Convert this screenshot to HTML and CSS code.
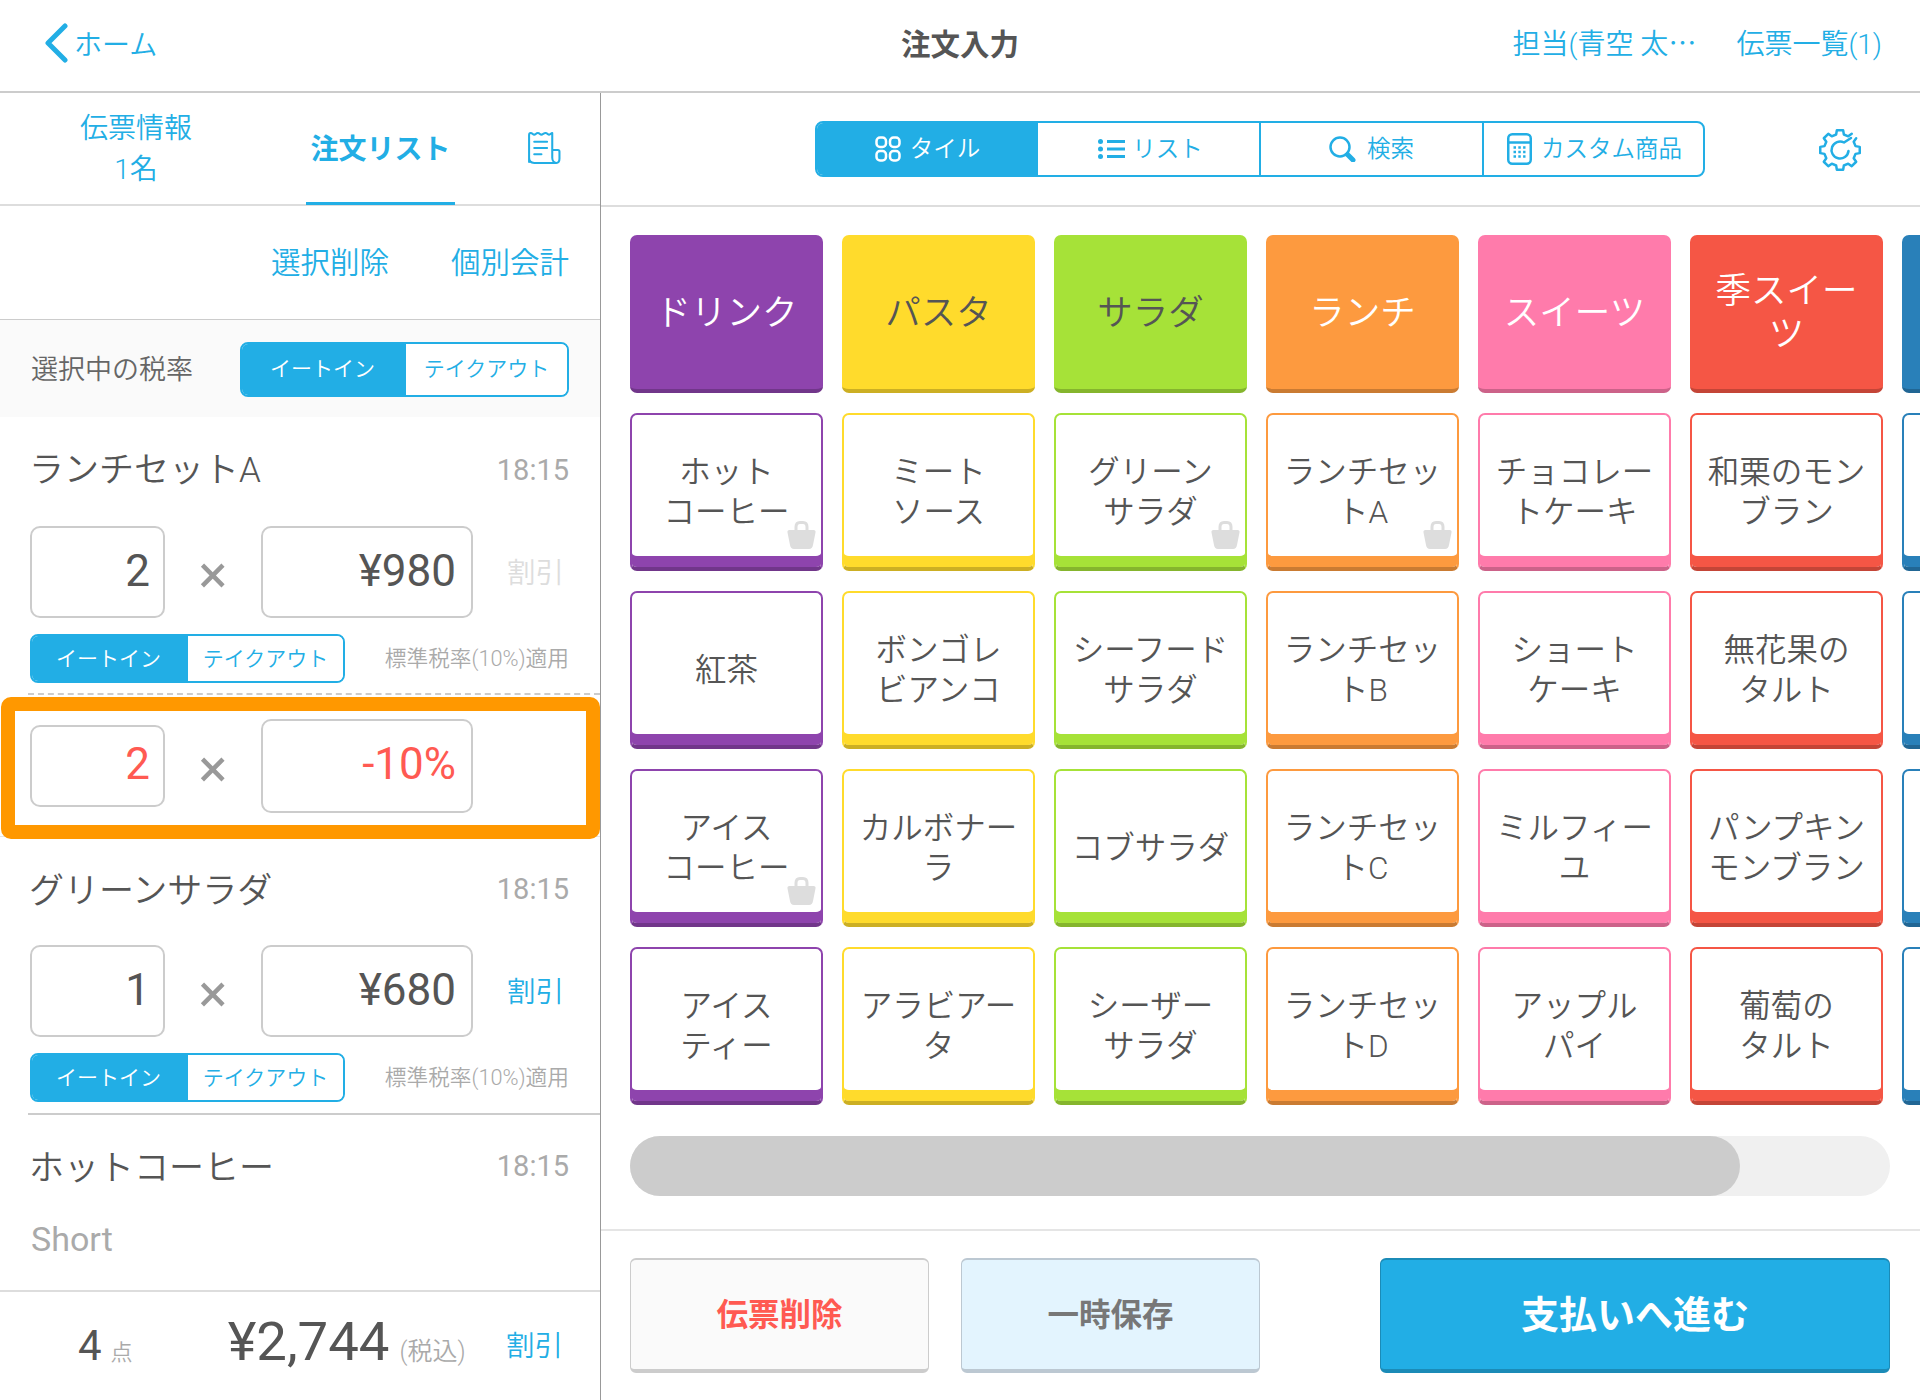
FILE: index.html
```html
<!DOCTYPE html>
<html lang="ja">
<head>
<meta charset="utf-8">
<title>注文入力</title>
<link rel="stylesheet" href="styles.css">
</head>
<body>
<div class="page">
  <header class="top">
    <a class="back">
      <svg class="chev" viewBox="0 0 24 40"><path d="M21 3 4 20l17 17" /></svg>
      <span>ホーム</span>
    </a>
    <h1 class="title">注文入力</h1>
    <div class="top-right">
      <a class="staff">担当(青空 太<span class="cjk">…</span></a>
      <a class="slips">伝票一覧(1)</a>
    </div>
  </header>
  <main class="main">
    <section class="left">
      <nav class="tabs">
        <a class="tab tab-info">伝票情報<br>1名</a>
        <a class="tab tab-active">注文リスト</a>
        <svg class="receipt" viewBox="0 0 34 32"><path d="M3 30V4c0-1 .5-2 1.500-2 2 0 2 1.500 3.500 1.500S9.500 2 11.500 2s2 1.500 3.500 1.500S17 2 19 2s2 1.500 3.500 1.500S24 2 25.500 2V26c0 3 2 5 4 5s3-2 3-4v-7c0-1-.7-1.500-1.500-1.500h-5M3 26c0 3 2 5 5 5h21.500M8 10.500h12.500M8 16.500h12.500M8 22.500h7" /></svg>
      </nav>
      <div class="actions">
        <a>選択削除</a>
        <a>個別会計</a>
      </div>
      <div class="taxbar">
        <span class="taxlabel">選択中の税率</span>
        <div class="toggle toggle-lg"><span class="on">イートイン</span><span class="off">テイクアウト</span></div>
      </div>

      <div class="item-head first"><span class="name">ランチセットA</span><span class="time">18:15</span></div>
      <div class="inputs">
        <div class="box qty">2</div><span class="times">×</span><div class="box price">¥980</div><a class="disc disabled">割引</a>
      </div>
      <div class="taxrow">
        <div class="toggle"><span class="on">イートイン</span><span class="off">テイクアウト</span></div>
        <span class="note">標準税率(10%)適用</span>
      </div>
      <div class="dash"></div>
      <div class="discrow">
        <div class="box qty red short">2</div><span class="times">×</span><div class="box price red">-10%</div>
        <div class="highlight"></div>
      </div>

      <div class="item-head second"><span class="name">グリーンサラダ</span><span class="time">18:15</span></div>
      <div class="inputs after-second">
        <div class="box qty">1</div><span class="times">×</span><div class="box price">¥680</div><a class="disc">割引</a>
      </div>
      <div class="taxrow">
        <div class="toggle"><span class="on">イートイン</span><span class="off">テイクアウト</span></div>
        <span class="note">標準税率(10%)適用</span>
      </div>
      <div class="solid"></div>

      <div class="item-head"><span class="name">ホットコーヒー</span><span class="time">18:15</span></div>
      <div class="option">Short</div>

      <footer class="sum">
        <span class="count">4</span><span class="unit">点</span>
        <span class="total">¥2,744</span><span class="taxin">(税込)</span>
        <a class="disc">割引</a>
      </footer>
    </section>

    <section class="right">
      <div class="toolbar">
        <div class="seg">
          <a class="seg-item active">
            <svg class="ic-tile" viewBox="0 0 26 26"><rect x="1.500" y="1.500" width="9.500" height="9.500" rx="3.500"/><rect x="15" y="1.500" width="9.500" height="9.500" rx="3.500"/><rect x="1.500" y="15" width="9.500" height="9.500" rx="3.500"/><rect x="15" y="15" width="9.500" height="9.500" rx="3.500"/></svg>
            <span>タイル</span>
          </a>
          <a class="seg-item list">
            <svg class="ic-list" viewBox="0 0 27 20"><circle cx="2.500" cy="2.500" r="2.500"/><circle cx="2.500" cy="10" r="2.500"/><circle cx="2.500" cy="17.500" r="2.500"/><rect x="9" y="1" width="18" height="3"/><rect x="9" y="8.500" width="18" height="3"/><rect x="9" y="16" width="18" height="3"/></svg>
            <span>リスト</span>
          </a>
          <a class="seg-item">
            <svg class="ic-search" viewBox="0 0 27 26"><circle cx="11" cy="11" r="9.500"/><path class="thick" d="M18.500 18.500 24 24"/></svg>
            <span>検索</span>
          </a>
          <a class="seg-item custom">
            <svg class="ic-calc" viewBox="0 0 25 32"><rect x="1.250" y="1.250" width="22.500" height="29.500" rx="4"/><path d="M1.250 9.500h22.500"/><path class="dots" d="M6.500 14.500h12M6.500 19h12M6.500 23.500h12"/></svg>
            <span>カスタム商品</span>
          </a>
        </div>
        <svg class="gear" viewBox="-21 -21 42 42"><polyline points="16.18,-11.75 13.71,-8.24 15.52,-3.87 19.75,-3.13 19.75,3.13 15.52,3.87 13.71,8.24 16.18,11.75 11.75,16.18 8.24,13.71 3.87,15.52 3.13,19.75 -3.13,19.75 -3.87,15.52 -8.24,13.71 -11.75,16.18 -16.18,11.75 -13.71,8.24 -15.52,3.87 -19.75,3.13 -19.75,-3.13 -15.52,-3.87 -13.71,-8.24 -16.18,-11.75 -11.75,-16.18 -8.24,-13.71 -3.87,-15.52 -3.13,-19.75 3.13,-19.75 3.87,-15.52 8.24,-13.71 11.75,-16.18"/><path d="M8.500 1A8.500 8.500 0 1 1 4 -7.500L11 -12"/></svg>
      </div>

      <div class="grid">
        <div class="cat purple"><span>ドリンク</span></div>
        <div class="cat yellow"><span>パスタ</span></div>
        <div class="cat green"><span>サラダ</span></div>
        <div class="cat orange"><span>ランチ</span></div>
        <div class="cat pink"><span>スイーツ</span></div>
        <div class="cat red-c"><span>季スイー<br>ツ</span></div>
        <div class="cat blue"></div>

        <div class="tile purple"><span>ホット<br>コーヒー</span><svg class="bag" viewBox="0 0 29 28"><path class="bag-h" d="M9 10V6q0-4.500 4-4.500h3q4 0 4 4.500v4"/><path d="M2.500 9h24q2.500 0 2 2.500L26 24q-.7 4-4 4H7q-3.300 0-4-4L.5 11.500Q0 9 2.500 9Z"/></svg></div>
        <div class="tile yellow"><span>ミート<br>ソース</span></div>
        <div class="tile green"><span>グリーン<br>サラダ</span><svg class="bag" viewBox="0 0 29 28"><path class="bag-h" d="M9 10V6q0-4.500 4-4.500h3q4 0 4 4.500v4"/><path d="M2.500 9h24q2.500 0 2 2.500L26 24q-.7 4-4 4H7q-3.300 0-4-4L.5 11.500Q0 9 2.500 9Z"/></svg></div>
        <div class="tile orange"><span>ランチセッ<br>トA</span><svg class="bag" viewBox="0 0 29 28"><path class="bag-h" d="M9 10V6q0-4.500 4-4.500h3q4 0 4 4.500v4"/><path d="M2.500 9h24q2.500 0 2 2.500L26 24q-.7 4-4 4H7q-3.300 0-4-4L.5 11.500Q0 9 2.500 9Z"/></svg></div>
        <div class="tile pink"><span>チョコレー<br>トケーキ</span></div>
        <div class="tile red-c"><span>和栗のモン<br>ブラン</span></div>
        <div class="tile blue"></div>

        <div class="tile purple"><span>紅茶</span></div>
        <div class="tile yellow"><span>ボンゴレ<br>ビアンコ</span></div>
        <div class="tile green"><span>シーフード<br>サラダ</span></div>
        <div class="tile orange"><span>ランチセッ<br>トB</span></div>
        <div class="tile pink"><span>ショート<br>ケーキ</span></div>
        <div class="tile red-c"><span>無花果の<br>タルト</span></div>
        <div class="tile blue"></div>

        <div class="tile purple"><span>アイス<br>コーヒー</span><svg class="bag" viewBox="0 0 29 28"><path class="bag-h" d="M9 10V6q0-4.500 4-4.500h3q4 0 4 4.500v4"/><path d="M2.500 9h24q2.500 0 2 2.500L26 24q-.7 4-4 4H7q-3.300 0-4-4L.5 11.500Q0 9 2.500 9Z"/></svg></div>
        <div class="tile yellow"><span>カルボナー<br>ラ</span></div>
        <div class="tile green"><span>コブサラダ</span></div>
        <div class="tile orange"><span>ランチセッ<br>トC</span></div>
        <div class="tile pink"><span>ミルフィー<br>ユ</span></div>
        <div class="tile red-c"><span>パンプキン<br>モンブラン</span></div>
        <div class="tile blue"></div>

        <div class="tile purple"><span>アイス<br>ティー</span></div>
        <div class="tile yellow"><span>アラビアー<br>タ</span></div>
        <div class="tile green"><span>シーザー<br>サラダ</span></div>
        <div class="tile orange"><span>ランチセッ<br>トD</span></div>
        <div class="tile pink"><span>アップル<br>パイ</span></div>
        <div class="tile red-c"><span>葡萄の<br>タルト</span></div>
        <div class="tile blue"></div>
      </div>

      <div class="track"><div class="thumb"></div></div>

      <div class="bottom">
        <button class="btn btn-del">伝票削除</button>
        <button class="btn btn-save">一時保存</button>
        <button class="btn btn-pay">支払いへ進む</button>
      </div>
    </section>
  </main>
</div>
</body>
</html>
```

FILE: styles.css
```css
* { box-sizing: border-box; }
html, body { margin: 0; padding: 0; background: #fff; }
body {
  font-family: Roboto, "Noto Sans CJK JP", sans-serif;
  font-weight: 350;
  color: #555;
  overflow: hidden;
}
.page { width: 1920px; height: 1400px; display: flex; flex-direction: column; overflow: hidden; }

/* header */
.top {
  height: 93px;
  flex: none;
  border-bottom: 2px solid #ccc;
  display: grid;
  grid-template-columns: 1fr auto 1fr;
  align-items: center;
  padding: 0 38px 5px;
  color: #22aee5;
}
.back { display: flex; align-items: center; font-size: 28px; gap: 6px; margin-left: 6px; }
.chev { width: 24px; height: 40px; fill: none; stroke: #22aee5; stroke-width: 5; stroke-linecap: round; stroke-linejoin: round; }
.title { margin: 0; padding-bottom: 2px; font-size: 29.500px; font-weight: 700; color: #555; }
.top-right { display: flex; justify-content: flex-end; gap: 40px; font-size: 28px; padding-bottom: 2px; }
.cjk { font-family: "Noto Sans CJK JP", sans-serif; }

.main { flex: 1; display: flex; min-height: 0; }

/* left */
.left { width: 601px; flex: none; border-right: 1px solid #999; display: flex; flex-direction: column; }
.tabs { height: 113px; flex: none; border-bottom: 2px solid #ddd; display: flex; color: #22aee5; font-size: 28px; position: relative; }
.tab { display: flex; align-items: center; justify-content: center; text-align: center; }
.tab-info { width: 272px; line-height: 41px; }
.tab-active { width: 149px; margin-left: 34px; font-weight: 700; height: 112px; border-bottom: 3px solid #22aee5; padding-bottom: 2px; }
.receipt { position: absolute; left: 526px; top: 38px; width: 35px; height: 33px; fill: none; stroke: #22aee5; stroke-width: 2; stroke-linecap: round; stroke-linejoin: round; }
.actions { height: 114px; flex: none; border-bottom: 1px solid #ccc; display: flex; justify-content: flex-end; align-items: center; gap: 62px; padding: 0 31px 6px 0; font-size: 29.500px; color: #22aee5; }
.taxbar { height: 97px; flex: none; background: #fafafa; display: flex; align-items: center; justify-content: space-between; padding: 0 31px; font-size: 27px; }
.taxlabel { color: #666; padding-bottom: 3px; }

.toggle { display: flex; width: 315px; height: 49px; border: 2px solid #22aee5; border-radius: 8px; overflow: hidden; font-size: 21px; flex: none; }
.toggle-lg { width: 329px; height: 55px; margin-top: 1px; }
.toggle .on { width: 156px; background: #22aee5; color: #fff; display: flex; align-items: center; justify-content: center; padding: 0 3px 4px 0; }
.toggle .off { flex: 1; color: #22aee5; background: #fff; display: flex; align-items: center; justify-content: center; padding-bottom: 4px; }
.toggle-lg .on { width: 164px; }

.item-head { height: 102px; flex: none; display: flex; justify-content: space-between; align-items: center; padding: 0 31px 0 29px; }
.item-head.first { height: 106px; margin-bottom: 3px; }
.item-head.first .name { padding-bottom: 8px; }
.item-head.second { margin-top: 1px; }
.inputs.after-second { margin-top: 5px; }
.name { font-size: 35px; color: #555; padding-bottom: 4px; }
.time { font-size: 29px; font-weight: 400; color: #aaa; }

.inputs { display: flex; align-items: center; padding-left: 30px; height: 92px; flex: none; }
.box { border: 2px solid #ccc; border-radius: 10px; height: 92px; display: flex; align-items: center; justify-content: flex-end; padding: 0 15px 3px 0; font-size: 44px; font-weight: 400; color: #555; flex: none; }
.qty { width: 135px; padding-right: 13px; }
.price { width: 212px; }
.times { width: 96px; text-align: center; font-size: 54px; font-weight: 400; line-height: 1; color: #999; padding-top: 6px; flex: none; }
.disc { font-size: 28.500px; color: #22aee5; margin-left: 34px; padding-bottom: 4px; }
.box.red { color: #ff5a52; }
.disabled { color: #ddd; }
.short { height: 82px; }
.taxrow { display: flex; justify-content: space-between; align-items: center; padding: 0 31px 0 30px; margin-top: 16px; flex: none; }
.note { font-size: 21.700px; color: #aaa; padding-bottom: 5px; }
.dash { margin: 10px 0 0 28px; border-top: 2px dashed #ccc; flex: none; }
.discrow { position: relative; height: 142px; flex: none; display: flex; align-items: center; padding-left: 30px; border-bottom: 1px solid #e5e5e5; }
.discrow .box.price { height: 94px; }
.highlight { position: absolute; left: 1px; top: 2px; width: 599px; height: 142px; border: 14px solid #ff9800; border-radius: 10px; }
.solid { margin: 11px 0 0 28px; border-top: 2px solid #ccc; flex: none; }
.option { height: 40px; margin-top: 2px; padding-left: 31px; font-size: 34px; font-weight: 400; line-height: 40px; color: #aaa; flex: none; }

.sum { margin-top: auto; height: 110px; flex: none; border-top: 2px solid #ddd; display: flex; align-items: baseline; padding: 17px 37px 0 78px; }
.count { font-size: 42px; font-weight: 400; }
.unit { font-size: 22px; color: #aaa; margin-left: 9px; }
.total { font-size: 54.500px; font-weight: 400; margin-left: 95px; }
.taxin { font-size: 25px; color: #aaa; margin-left: 10px; }
.sum .disc { margin: 14px 0 0 auto; padding-bottom: 0; align-self: flex-start; }

/* right */
.right { flex: 1; min-width: 0; display: flex; flex-direction: column; overflow: hidden; }
.toolbar { height: 114px; flex: none; border-bottom: 2px solid #ddd; display: flex; align-items: center; padding: 0 59px 0 214px; justify-content: space-between; }
.seg { width: 890px; height: 56px; display: flex; border: 2px solid #22aee5; border-radius: 8px; overflow: hidden; color: #22aee5; font-size: 23.500px; }
.seg-item { width: 223px; display: flex; align-items: center; justify-content: center; gap: 11px; border-right: 2px solid #22aee5; flex: none; padding-bottom: 4px; }
.seg-item svg { margin-top: 4px; }
.seg-item:last-child { border-right: 0; flex: 1; }
.seg-item.active { background: #22aee5; color: #fff; border-right-width: 0; width: 221px; gap: 9px; }
.seg-item.list { gap: 7px; padding-left: 4px; }
.seg-item.custom { gap: 9px; padding-left: 2px; }
.ic-tile { width: 26px; height: 26px; fill: none; stroke: #fff; stroke-width: 2.500; }
.ic-list { width: 27px; height: 20px; fill: #22aee5; }
.ic-search { width: 27px; height: 26px; fill: none; stroke: #22aee5; stroke-width: 2.500; }
.ic-search .thick { stroke-width: 5; stroke-linecap: round; }
.ic-calc { width: 25px; height: 32px; fill: none; stroke: #22aee5; stroke-width: 2.500; }
.ic-calc .dots { stroke-width: 2.500; stroke-dasharray: 2.500 2.300; }
.gear { width: 42px; height: 42px; fill: none; stroke: #22aee5; stroke-width: 2.500; stroke-linejoin: round; stroke-linecap: round; margin-top: 2px; }

.grid { display: grid; grid-template-columns: repeat(7, 193px); grid-auto-rows: 158px; column-gap: 19px; row-gap: 20px; margin: 28px 0 0 29px; flex: none; }
.purple { --c: #8e44ad; --d: #71368a; }
.yellow { --c: #ffdb2c; --d: #ccaf23; }
.green { --c: #a6e238; --d: #85b52d; }
.orange { --c: #fd9a3f; --d: #ca7b32; }
.pink { --c: #ff7bab; --d: #cc6289; }
.red-c { --c: #f55645; --d: #c44537; }
.blue { --c: #2980b9; --d: #216694; }
.cat { background: var(--c); border-bottom: 4px solid var(--d); border-radius: 7px; display: flex; align-items: center; justify-content: center; text-align: center; font-size: 35.500px; line-height: 43px; color: #fff; padding-top: 2px; }
.cat.yellow, .cat.green { color: #555; }
.tile { position: relative; border: 2px solid var(--c); border-bottom: 4px solid var(--d); border-radius: 7px; box-shadow: inset 0 -11px 0 var(--c); display: flex; align-items: center; justify-content: center; text-align: center; font-size: 31.500px; line-height: 40px; color: #555; background: #fff; padding-top: 3px; }
.bag { position: absolute; right: 5px; bottom: 18px; width: 29px; height: 28px; fill: #ddd; }
.bag-h { fill: none; stroke: #ddd; stroke-width: 3; }

.track { width: 1260px; height: 60px; margin: 31px 0 0 29px; background: #f0f0f0; border-radius: 30px; flex: none; }
.thumb { width: 1110px; height: 60px; background: #ccc; border-radius: 30px; }

.bottom { margin-top: 33px; height: 171px; flex: none; border-top: 2px solid #e5e5e5; padding: 27px 30px 0 29px; display: flex; align-items: flex-start; }
.btn { height: 115px; border-radius: 6px; font-family: inherit; font-weight: 700; font-size: 31.500px; border-style: solid; border-width: 2px 1px 4px; padding: 0 0 6px; }
.btn-del { width: 299px; background: #fafafa; border-color: #ccc; color: #ff5a52; }
.btn-save { width: 299px; margin-left: 32px; background: #e3f4fe; border-color: #bcc8d2; color: #777; }
.btn-pay { width: 510px; margin-left: auto; background: #22aee5; border-color: #1b8bb7; color: #fff; font-size: 38px; }
```
